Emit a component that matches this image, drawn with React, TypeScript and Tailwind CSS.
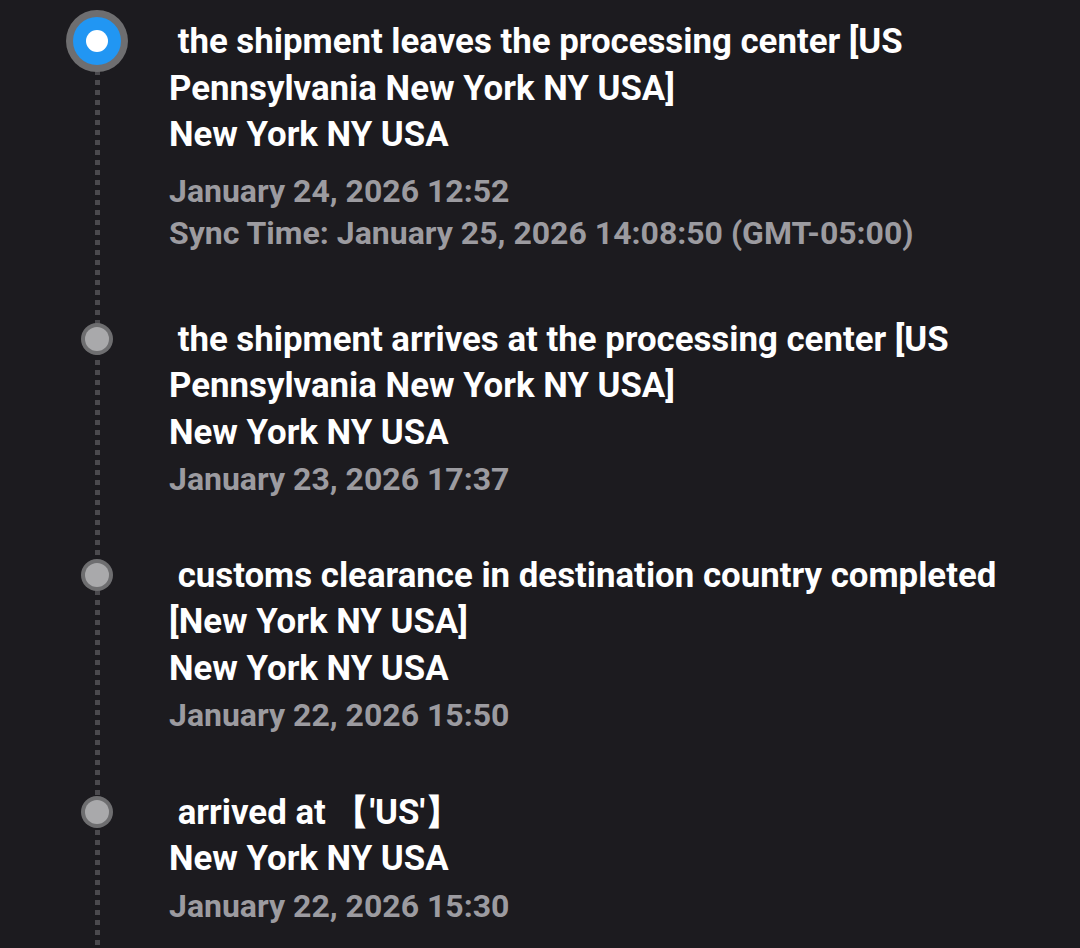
const items = [
  {
    title: ['\u00a0the shipment leaves the processing center [US', 'Pennsylvania New York NY USA]'],
    place: 'New York NY USA',
    time: 'January 24, 2026 12:52',
    sync: 'Sync Time: January 25, 2026 14:08:50 (GMT-05:00)',
    active: true,
    pad: 'pb-[62px]',
  },
  {
    title: ['\u00a0the shipment arrives at the processing center [US', 'Pennsylvania New York NY USA]'],
    place: 'New York NY USA',
    time: 'January 23, 2026 17:37',
    pad: 'pb-[49px]',
  },
  {
    title: ['\u00a0customs clearance in destination country completed', '[New York NY USA]'],
    place: 'New York NY USA',
    time: 'January 22, 2026 15:50',
    pad: 'pb-[50px]',
  },
  {
    title: ["\u00a0arrived at \u3010'US'\u3011"],
    place: 'New York NY USA',
    time: 'January 22, 2026 15:30',
    pad: 'pb-[50px]',
  },
];

type Item = (typeof items)[number] & { sync?: string; active?: boolean };

function Dot({ active }: { active?: boolean }) {
  if (active) {
    return (
      <div className="w-[62px] h-[62px] rounded-full bg-[#6e6e70] flex items-center justify-center">
        <div className="w-[48px] h-[48px] rounded-full bg-[#2196f3] flex items-center justify-center">
          <div className="w-[22px] h-[22px] rounded-full bg-white" />
        </div>
      </div>
    );
  }
  return (
    <div className="w-[32px] h-[32px] rounded-full bg-[#6e6e70] flex items-center justify-center">
      <div className="w-[24px] h-[24px] rounded-full bg-[#a9a9ab]" />
    </div>
  );
}

function Row({ item }: { item: Item }) {
  return (
    <div className="relative flex">
      <div className="w-[169px] shrink-0 relative">
        <div className="absolute left-[97px] top-[23px] -translate-x-1/2 -translate-y-1/2 z-10">
          <Dot active={item.active} />
        </div>
      </div>
      <div className={item.pad}>
        <div className="text-white text-[34.8px] leading-[46.5px]">
          {item.title.map((t) => (
            <div key={t} className="whitespace-pre">{t}</div>
          ))}
          <div>{item.place}</div>
        </div>
        {item.sync ? (
          <div className="text-[#9c9ba0] leading-[42px] mt-[12px]">
            <div>{item.time}</div>
            <div>{item.sync}</div>
          </div>
        ) : (
          <div className="text-[#9c9ba0] leading-[46.5px] mt-px">{item.time}</div>
        )}
      </div>
    </div>
  );
}

export default function App() {
  return (
    <div
      className="relative w-[1080px] h-[948px] overflow-hidden bg-[#1c1b1f] text-[32px] font-bold"
      style={{ fontFamily: 'Roboto, "Noto Sans", sans-serif' }}
    >
      {/* dotted connector */}
      <div className="absolute left-[95px] top-[60px] bottom-0 w-[5px] bg-[repeating-linear-gradient(to_bottom,#4b4a4e_0px,#4b4a4e_5px,transparent_5px,transparent_10px)]" />
      <div className="pt-[18px]">
        {items.map((it, i) => (
          <Row key={i} item={it as Item} />
        ))}
      </div>
    </div>
  );
}
